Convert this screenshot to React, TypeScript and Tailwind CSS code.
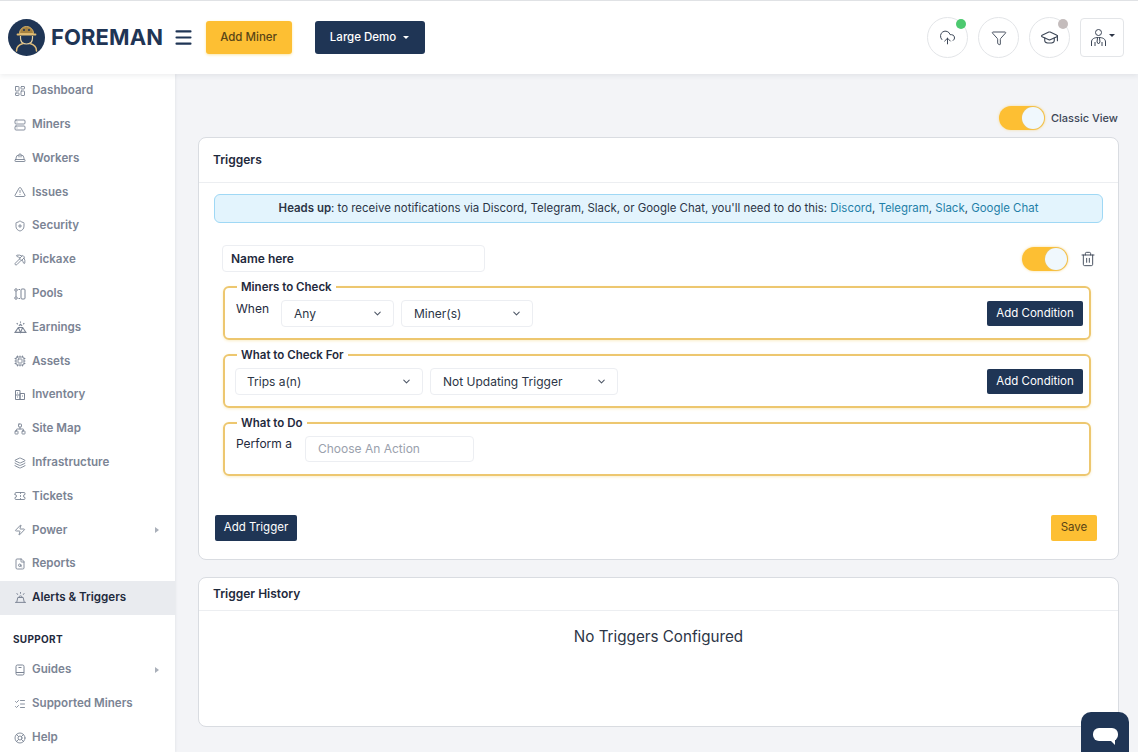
import {
  ChevronDown, CloudUpload, Cpu, FileSearch, Filter, GraduationCap, HardHat, LayoutDashboard, LifeBuoy,
  ListChecks, Layers, Menu, Network, Pickaxe, Server, ShieldPlus, Ticket, Trash2,
  TriangleAlert, Zap,
} from "lucide-react";
import type { ReactNode } from "react";

// small ones lucide has no match for
const PoolsIcon = () => (
  <svg width="12" height="12" viewBox="0 0 24 24" fill="none" stroke="currentColor" strokeWidth="2">
    <circle cx="4" cy="4" r="2.5" />
    <circle cx="4" cy="20" r="2.5" />
    <path d="M4 7v10M9 3h3M9 21h3" />
    <rect x="14" y="2" width="8" height="20" rx="2" />
  </svg>
);

const EarningsIcon = () => (
  <svg width="13" height="13" viewBox="0 0 24 24" fill="none" stroke="currentColor" strokeWidth="2">
    <path d="M2 21 8 12h8l6 9zM8 12l4 9 4-9M9 9l3-3 3 3M12 1v2M5 4l2 2M19 4l-2 2" />
  </svg>
);

const InventoryIcon = () => (
  <svg width="12" height="12" viewBox="0 0 24 24" fill="none" stroke="currentColor" strokeWidth="2">
    <path d="M3 3h9v18H3zM12 9h9v12h-9zM3 12h9M16 14h2M7 7v2M7 15v2" />
  </svg>
);

const AlertBellIcon = () => (
  <svg width="13" height="13" viewBox="0 0 24 24" fill="none" stroke="currentColor" strokeWidth="1.800">
    <path d="M2 21h20M5 21l2-9h10l2 9M9 12a3 3 0 0 1 6 0M12 2v3M5 4l2 3M19 4l-2 3" />
  </svg>
);

const NotebookIcon = () => (
  <svg width="12" height="12" viewBox="0 0 24 24" fill="none" stroke="currentColor" strokeWidth="2">
    <rect x="4" y="2" width="16" height="20" rx="3" />
    <path d="M4 17h16M9 7h6" />
  </svg>
);

const UserTieIcon = () => (
  <svg width="17" height="19" viewBox="0 0 17 19" fill="none" stroke="currentColor" strokeWidth="1">
    <circle cx="8.500" cy="4.500" r="3" />
    <path d="M1.500 18v-4c0-3 2.500-4.500 7-4.500s7 1.500 7 4.500v4M5 18v-4M12 18v-4M7.500 10l-.5 4 1.500 2 1.500-2-.5-4" />
  </svg>
);

const Logo = () => (
  <svg width="37" height="37" viewBox="0 0 37 37" fill="none">
    <circle cx="18.500" cy="18.500" r="18.500" fill="#1f3555" />
    <path d="M11.500 14.500a7 7 0 0 1 14 0z" fill="#a5813f" stroke="#d9b36a" strokeWidth="1" />
    <path d="M9.500 15.500h18" stroke="#e2bd73" strokeWidth="1.800" strokeLinecap="round" />
    <path d="M12.500 17v2c0 4 2.500 6 6 6s6-2 6-6v-2" stroke="#e8d2a2" strokeWidth="1.200" />
    <path d="M8.500 32c0-4 2.500-6.500 6.500-7.500M28.500 32c0-4-2.500-6.500-6.500-7.500" stroke="#e0bd7a" strokeWidth="1.500" strokeLinecap="round" />
    <circle cx="16" cy="11" r="1" fill="#1f3555" />
    <circle cx="21" cy="11" r="1" fill="#1f3555" />
  </svg>
);

const ic = { size: 12, strokeWidth: 1.8 };

const mainItems: { label: string; icon: ReactNode; arrow?: boolean; active?: boolean }[] = [
  { label: "Dashboard", icon: <LayoutDashboard {...ic} /> },
  { label: "Miners", icon: <Server {...ic} /> },
  { label: "Workers", icon: <HardHat {...ic} /> },
  { label: "Issues", icon: <TriangleAlert {...ic} /> },
  { label: "Security", icon: <ShieldPlus {...ic} /> },
  { label: "Pickaxe", icon: <Pickaxe {...ic} /> },
  { label: "Pools", icon: <PoolsIcon /> },
  { label: "Earnings", icon: <EarningsIcon /> },
  { label: "Assets", icon: <Cpu {...ic} /> },
  { label: "Inventory", icon: <InventoryIcon /> },
  { label: "Site Map", icon: <Network {...ic} /> },
  { label: "Infrastructure", icon: <Layers {...ic} /> },
  { label: "Tickets", icon: <Ticket {...ic} /> },
  { label: "Power", icon: <Zap {...ic} />, arrow: true },
  { label: "Reports", icon: <FileSearch {...ic} /> },
  { label: "Alerts & Triggers", icon: <AlertBellIcon />, active: true },
];

const supportItems: { label: string; icon: ReactNode; arrow?: boolean; active?: boolean }[] = [
  { label: "Guides", icon: <NotebookIcon />, arrow: true },
  { label: "Supported Miners", icon: <ListChecks {...ic} /> },
  { label: "Help", icon: <LifeBuoy {...ic} /> },
];

function NavRow({ item }: { item: { label: string; icon: ReactNode; arrow?: boolean; active?: boolean } }) {
  return (
    <div className={`flex h-[33.8px] shrink-0 items-center pl-[14px] pr-[16px] text-[11.6px] font-semibold ${item.active ? "bg-[#e9ebef] text-[#1f2a3d]" : "text-[#7b8494]"}`}>
      <span className="flex w-[18px] shrink-0 items-center text-[#7b8494]">{item.icon}</span>
      <span className="flex-1 whitespace-nowrap">{item.label}</span>
      {item.arrow && <span className="h-0 w-0 border-y-[3px] border-l-[4px] border-y-transparent border-l-[#a9afb9]" />}
    </div>
  );
}

function Toggle() {
  return (
    <div className="flex h-[24px] w-[46px] items-center justify-end rounded-full bg-[#fdbf33] p-[1px] shadow-[0_0_3px_#f7dc9a]">
      <div className="h-[22px] w-[22px] rounded-full bg-[#f0f8fd] shadow-[0_0_2px_#d9c48a]" />
    </div>
  );
}

function Select({ label, className }: { label: string; className: string }) {
  return (
    <div className={`flex h-[27px] items-center justify-between rounded-[4px] border border-[#eceef2] bg-white pl-3 pr-[10px] text-[12px] text-[#2c3546] ${className}`}>
      <span>{label}</span>
      <ChevronDown size={11} strokeWidth={2.2} className="text-[#4d5666]" />
    </div>
  );
}

function Group({ title, children }: { title: string; children: ReactNode }) {
  return (
    <fieldset className="mb-[9px] ml-[24px] mr-[27px] h-[59px] rounded-[6px] border-2 border-[#edc76f] pl-[11px] pr-[6px] shadow-[0_1px_3px_#faeec9]">
      <legend className="ml-[1px] px-[4px] text-[11.5px] leading-[12px] font-semibold text-[#1f2a3d]">{title}</legend>
      <div className="flex items-start pt-[7px]">{children}</div>
    </fieldset>
  );
}

function AddCondition() {
  return (
    <button className="ml-auto mt-px h-[25px] w-[96px] rounded-[2px] bg-[#1f3555] text-[11.5px] text-white">Add Condition</button>
  );
}

function HeaderCircle({ children, dot }: { children: ReactNode; dot?: string }) {
  return (
    <div className="relative flex h-[41px] w-[41px] items-center justify-center rounded-full border border-[#e3e5e8] text-[#3c4656]">
      {children}
      {dot && <span className={`absolute right-[1px] top-[1px] h-[10px] w-[10px] rounded-full ${dot}`} />}
    </div>
  );
}

export default function App() {
  return (
    <div className="relative flex h-screen flex-col overflow-hidden bg-[#f3f4f7] font-['Inter',sans-serif] text-[#1f2a3d]">
      <header className="relative z-10 flex h-[74px] shrink-0 items-center border-t border-[#e0e2e5] bg-white pl-[8px] pr-[14px] shadow-[0_2px_5px_rgba(40,50,70,0.08)]">
        <Logo />
        <span className="ml-[6px] text-[22px] font-bold tracking-[0.1px] text-[#1f3555]">FOREMAN</span>
        <Menu size={21} strokeWidth={2.4} className="ml-[10px] text-[#1f3555]" />
        <button className="ml-[11.5px] h-[33px] w-[86px] rounded-[3px] bg-[#fdbf33] text-[11.5px] font-medium text-[#5a4516] shadow-[0_1px_3px_#fbe7a8]">Add Miner</button>
        <button className="ml-[23px] flex h-[33px] w-[110px] items-center justify-center gap-[7px] rounded-[3px] bg-[#1f3555] text-[11.5px] font-medium text-white">
          Large Demo
          <span className="h-0 w-0 border-x-[3px] border-t-[3px] border-x-transparent border-t-white" />
        </button>
        <div className="ml-auto flex items-center gap-[10px]">
          <HeaderCircle dot="bg-[#4cc96f]"><CloudUpload size={17} strokeWidth={1.4} /></HeaderCircle>
          <HeaderCircle><Filter size={16} strokeWidth={1.4} /></HeaderCircle>
          <HeaderCircle dot="bg-[#c4bcbc]"><GraduationCap size={19} strokeWidth={1.4} /></HeaderCircle>
          <div className="flex h-[39px] w-[44px] items-center justify-center gap-[2px] rounded-[4px] border border-[#e3e5e8] text-[#3c4656]">
            <UserTieIcon />
            <span className="mb-1 h-0 w-0 border-x-[3px] border-t-[3px] border-x-transparent border-t-[#2c3546]" />
          </div>
        </div>
      </header>

      <div className="flex min-h-0 flex-1">
        <aside className="flex w-[175px] shrink-0 flex-col overflow-hidden bg-white shadow-[1px_0_2px_rgba(40,50,70,0.06)]">
          {mainItems.map((item) => (
            <NavRow key={item.label} item={item} />
          ))}
          <div className="mt-[17px] mb-[7.500px] shrink-0 pl-[13px] text-[10px] leading-[14px] font-bold tracking-[0.3px] text-[#1f2a3d]">SUPPORT</div>
          {supportItems.map((item) => (
            <NavRow key={item.label} item={item} />
          ))}
        </aside>

        <main className="min-w-0 flex-1 pl-[23px] pr-[19px]">
          <div className="flex h-[63px] items-end justify-end gap-[6px] pb-[7px] pr-px text-[11px] font-medium text-[#3c4656]">
            <Toggle />
            <span className="mb-[5px] leading-[14px]">Classic View</span>
          </div>

          <section className="h-[423px] rounded-[8px] border border-[#d9dce1] bg-white">
            <div className="flex h-[45px] items-center border-b border-[#eceef1] pl-[14px] text-[12px] font-semibold">Triggers</div>
            <div className="mx-[15px] mt-[11px] flex h-[29px] items-center justify-center rounded-[6px] border border-[#9fd8f5] bg-[#e3f4fd] text-[11.45px] text-[#2c3546]">
              <span className="font-semibold">Heads up</span>: to receive notifications via Discord, Telegram, Slack, or Google Chat, you'll need to do this:&nbsp;
              <span className="text-[#1f7fa8]">Discord</span>,&nbsp;<span className="text-[#1f7fa8]">Telegram</span>,&nbsp;<span className="text-[#1f7fa8]">Slack</span>,&nbsp;<span className="text-[#1f7fa8]">Google Chat</span>
            </div>

            <div className="mb-[9px] mt-[22px] flex items-center pl-[23px] pr-[22px]">
              <div className="flex h-[27px] w-[263px] items-center rounded-[4px] border border-[#eceef2] pl-[8px] text-[12px] font-semibold">Name here</div>
              <div className="ml-auto mr-[12px]"><Toggle /></div>
              <Trash2 size={16} strokeWidth={1.4} className="text-[#3c4656]" />
            </div>

            <Group title="Miners to Check">
              <span className="w-[45px] text-[12px]">When</span>
              <Select label="Any" className="w-[113px]" />
              <Select label="Miner(s)" className="ml-[7px] w-[132px]" />
              <AddCondition />
            </Group>
            <Group title="What to Check For">
              <Select label="Trips a(n)" className="-ml-px w-[188px] pl-[11px]" />
              <Select label="Not Updating Trigger" className="ml-[7px] w-[188px]" />
              <AddCondition />
            </Group>
            <Group title="What to Do">
              <span className="-mt-px w-[69px] text-[12px]">Perform a</span>
              <div className="flex h-[26px] w-[169px] items-center rounded-[4px] border border-[#eceef2] pl-3 text-[12px] text-[#9aa1ad]">Choose An Action</div>
            </Group>

            <div className="mt-[39px] flex items-center justify-between pl-[16px] pr-[21px]">
              <button className="h-[26px] w-[82px] rounded-[2px] bg-[#1f3555] text-[11.5px] text-white">Add Trigger</button>
              <button className="h-[26px] w-[46px] rounded-[2px] bg-[#fdbf33] text-[11.5px] text-[#5a4516]">Save</button>
            </div>
          </section>

          <section className="mt-[17px] h-[150px] rounded-[8px] border border-[#d9dce1] bg-white">
            <div className="flex h-[33px] items-center border-b border-[#eceef1] pl-[14px] text-[12px] font-semibold">Trigger History</div>
            <div className="mt-[15px] text-center text-[15.200px] text-[#2c3546]">No Triggers Configured</div>
          </section>
        </main>
      </div>

      {/* chat launcher floats over the page */}
      <div className="absolute bottom-[-8px] right-[9px] flex h-[48px] w-[48px] items-start justify-center rounded-t-[10px] bg-[#1f3555] pt-[16px]">
        <div className="relative h-[13px] w-[25px] rounded-[6px] bg-white">
          <span className="absolute -bottom-[4px] right-[3px] h-0 w-0 border-l-[5px] border-t-[5px] border-l-transparent border-t-white" />
        </div>
      </div>
    </div>
  );
}
